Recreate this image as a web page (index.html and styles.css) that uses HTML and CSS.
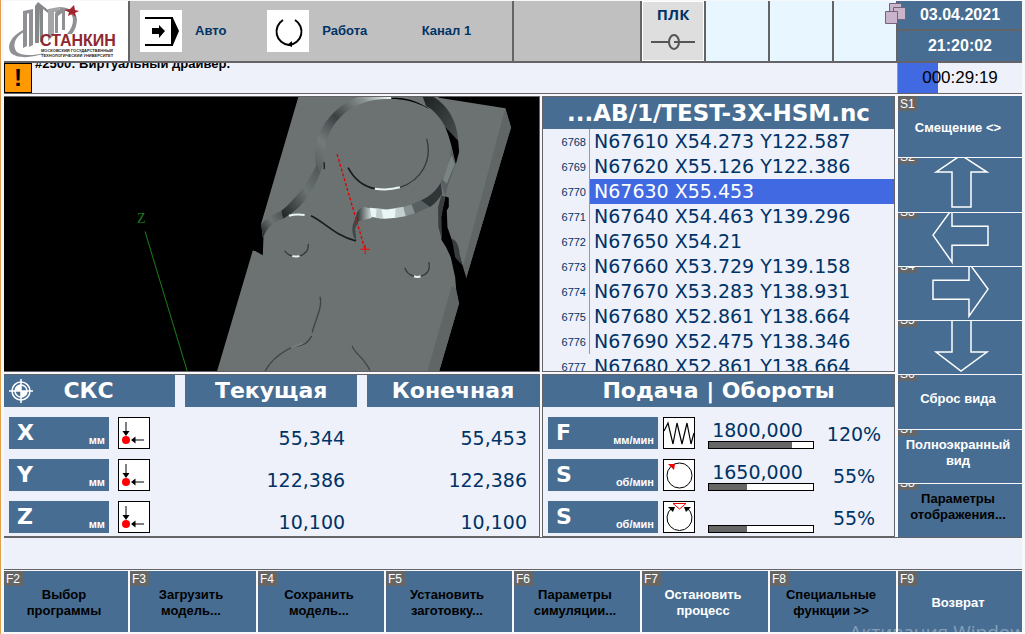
FILE: index.html
```html
<!DOCTYPE html>
<html lang="ru">
<head>
<meta charset="utf-8">
<title>СТАНКИН ЧПУ</title>
<link rel="stylesheet" href="styles.css">
</head>
<body>
<svg class="defs" aria-hidden="true">
  <symbol id="refpoint" viewBox="0 0 30 30">
    <path d="M7 4v10M16 22h9" stroke="#555" stroke-width="1.5"/>
    <path d="M3.500 13h7L7 18zM12 22l4.500-3.500v7z"/>
    <circle cx="7" cy="22" r="4" fill="#f00"/>
  </symbol>
</svg>

<header class="top cols">
  <div class="logo">
    <svg viewBox="0 0 124 60" role="img" aria-label="Станкин">
      <path d="M19 29C7 35 2 45 7 52c6 6 22 5 34 0-13 3-25 3-29-2-4-7 0-15 8-19z" fill="#8f9194"/>
      <path d="M19 10l10-2v36l-4 2V12l-2 1v32l-4 2z" fill="#8f9194"/>
      <path d="M31 5l3-4 10 8v3l-5-4v33h-3V7l-1 35h-4z" fill="#85888b"/>
      <path d="M44 8l11-2v5h-5v23l-6 6z" fill="#a3a5a7"/>
      <path d="M57 7l4 1v21h-3V12l-4 3v17h-3V12z" fill="#8f9194"/>
      <path d="M55 6c9 0 17 4 18 12 0 6-2 11-5 15h-5c4-5 6-9 6-14 0-7-6-10-13-10z" fill="#8f9194"/>
      <path d="M70 4l1 5 4 1-4 2 1 4-4-3-4 2 1-4-5-2 6-1z" fill="#a3262e"/>
      <text class="logo-name" x="36" y="45">СТАНКИН</text>
      <text class="logo-sub" x="37" y="51">МОСКОВСКИЙ ГОСУДАРСТВЕННЫЙ</text>
      <text class="logo-sub" x="37" y="56">ТЕХНОЛОГИЧЕСКИЙ УНИВЕРСИТЕТ</text>
    </svg>
  </div>
  <div class="modes">
    <div class="mode">
      <svg class="mode-icon" viewBox="0 0 42 42" aria-hidden="true"><path d="M5 8h27v27H5" fill="none" stroke="#000" stroke-width="2"/><path d="M31 8h2l6 13-6 14h-2zM12 18h7v-3l6 6-6 7v-4h-7z"/></svg>
      <span>Авто</span>
    </div>
    <div class="mode">
      <svg class="mode-icon" viewBox="0 0 42 42" aria-hidden="true"><path d="M16 10A13.500 13.500 0 0 0 22 35A13.500 13.500 0 0 0 28 10" fill="none" stroke="#000" stroke-width="2"/><path d="M20 35l5-4v6z"/></svg>
      <span>Работа</span>
    </div>
    <div class="mode channel"><span>Канал 1</span></div>
  </div>
  <div class="idle"></div>
  <div class="pair">
    <div class="plc"><span>ПЛК</span>
      <svg viewBox="0 0 46 18" aria-hidden="true"><path d="M1 9h18M24 9h21" stroke="#555" stroke-width="2"/><ellipse cx="24" cy="9" rx="5" ry="7" fill="none" stroke="#555" stroke-width="2"/></svg>
    </div>
    <div class="free"></div>
  </div>
  <div class="pair"><div class="free"></div><div class="free"></div></div>
  <div class="clock">
    <time>03.04.2021</time><time>21:20:02</time>
    <svg class="stack" viewBox="0 0 21 22" aria-hidden="true"><g fill="#c9b4cb" stroke="#72627c"><path d="M4.500.5h12v12h-12z"/><path d="M8.500 4.500h12v12h-12z"/><path d="M.5 8.500h12v12H.5z"/></g></svg>
  </div>
</header>

<div class="alarm">
  <div class="alarm-sign">!</div>
  <div class="alarm-text"><p>#2500: Виртуальный драйвер.</p></div>
  <div class="timer"><span>000:29:19</span></div>
</div>

<main class="work">
  <section class="scene">
    <svg viewBox="0 0 536 273" preserveAspectRatio="xMidYMid slice" role="img" aria-label="Модель детали">
      <defs>
        <linearGradient id="g1" x1="0" y1="1" x2="1" y2="0"><stop offset="0" stop-color="#555b5c"/><stop offset=".25" stop-color="#747a7b"/><stop offset=".5" stop-color="#3c4042"/><stop offset=".8" stop-color="#8c9494"/><stop offset="1" stop-color="#f4ffff"/></linearGradient>
        <linearGradient id="g2" x1="1" y1="0" x2="0" y2="1"><stop offset="0" stop-color="#4b5152"/><stop offset=".45" stop-color="#6b7272"/><stop offset="1" stop-color="#1c1f20"/></linearGradient>
        <linearGradient id="g3" x1="0" y1="0" x2="1" y2="1"><stop offset="0" stop-color="#1c2021"/><stop offset="1" stop-color="#4a5051"/></linearGradient>
        <linearGradient id="g4"><stop offset="0" stop-color="#2b2f30"/><stop offset="1" stop-color="#d8e4e4"/></linearGradient>
      </defs>
      <g transform="translate(196 -7) scale(.3333)">
        <path fill="#6b7271" d="M298 15H716V23L915 55 932 112 798 562 770 520V600L777 637 716 845H52L160 480 185 485 190 440 185 400z"/>
        <path fill="#5f6665" d="M915 55l17 57-134 450-12-26zM755 585l15 10 7 42-61 208h-35z"/>
        <path fill="url(#g1)" d="M573 18H482C405 45 340 120 346 205L362 247 374 215C368 150 400 90 455 55 500 30 530 27 573 27z"/>
        <path fill="url(#g2)" d="M346 205L362 247C335 315 300 360 250 385L245 362C290 325 330 270 350 225z"/>
        <path fill="url(#g2)" d="M245 362L250 386C220 395 200 415 192 440L184 402C200 385 220 372 245 362z"/>
        <path d="M192 440L190 494 165 480 182 440zM372 215v22h3v-20zM575 24C620 20 660 38 690 58L670 48C640 34 610 27 575 27z"/>
        <path fill="url(#g3)" d="M668 20H700C740 45 772 90 774 155L735 110C720 80 695 55 678 48z"/>
        <path d="M735 110L774 152 777 185 767 222C757 180 750 145 735 110z"/>
        <path fill="#5a6061" d="M752 170L766 222 742 290 736 318 722 275C738 250 752 215 752 170z"/>
        <path fill="#7b8484" d="M754 195L764 222 740 280 728 268z"/>
        <path d="M736 318L746 322V350L740 360 742 410 755 448 775 485 798 560 785 575 777 637 768 595 765 560 752 500 738 470 724 448 720 390z"/>
        <path fill="#383d3e" d="M724 315L735 320 724 380 726 450 715 410 714 350zM755 445C770 450 778 470 778 490L787 525 765 500z"/>
        <path fill="url(#g4)" d="M495 350L517 356 515 383 480 392 470 398V375C472 360 482 352 495 350z"/>
        <path fill="#e8f6f6" d="M510 352L560 357 592 353 590 382 555 385 515 380z"/>
        <path fill="#c3cecf" d="M530 355h15l5 30-22-2zM587 353l25-4 8 28-35 6z"/>
        <path fill="#889192" d="M610 350l25-8 12 26-30 9z"/>
        <path fill="#596061" d="M635 342l30-13 25 20-45 20z"/>
        <path fill="#303537" d="M663 330C690 318 710 298 722 277L726 310C713 332 700 342 690 350z"/>
        <path fill="#424849" d="M470 375L462 395C455 410 457 425 462 440L470 452 466 415 474 398z"/>
        <g fill="none">
          <path stroke="#171b1c" stroke-width="5" d="M445 232C465 270 490 288 525 295M334 376C375 395 405 435 468 451"/>
          <path stroke="#e8f4f4" stroke-width="6" d="M525 295Q565 301 600 291M268 376Q290 370 315 374M278 496q12 4 22 0M642 557q10 4 20 0"/>
          <path stroke="#353b3c" stroke-width="4" d="M600 291C665 270 697 210 680 146M255 480q10 14 23 16M300 496q28-8 26-36M615 532q4 18 27 25M662 557q32-9 24-42"/>
          <path stroke="#3e4445" stroke-width="4" d="M361 618C370 650 345 690 338 725M336 735C315 775 290 760 265 775 230 795 210 815 197 840M457 765C465 790 490 795 510 838"/>
          <path stroke="#777f7f" stroke-width="5" d="M275 771l35-14"/>
          <path stroke="#e00000" stroke-width="4" stroke-dasharray="9 6" d="M412 192L495 475"/>
          <path stroke="#f00" stroke-width="3" d="M482 476h28M496 462v28"/>
        </g>
      </g>
      <path d="M142 134L184 273" stroke="#177a17"/>
      <text class="axis" x="134" y="126">Z</text>
    </svg>
  </section>

  <section class="program">
    <h2>...AB/1/TEST-3X-HSM.nc</h2>
    <div class="listing">
      <table>
        <tr><th>6768</th><td>N67610 X54.273 Y122.587</td></tr>
        <tr><th>6769</th><td>N67620 X55.126 Y122.386</td></tr>
        <tr class="current"><th>6770</th><td>N67630 X55.453</td></tr>
        <tr><th>6771</th><td>N67640 X54.463 Y139.296</td></tr>
        <tr><th>6772</th><td>N67650 X54.21</td></tr>
        <tr><th>6773</th><td>N67660 X53.729 Y139.158</td></tr>
        <tr><th>6774</th><td>N67670 X53.283 Y138.931</td></tr>
        <tr><th>6775</th><td>N67680 X52.861 Y138.664</td></tr>
        <tr><th>6776</th><td>N67690 X52.475 Y138.346</td></tr>
        <tr><th>6777</th><td>N67680 X52.861 Y138.664</td></tr>
      </table>
    </div>
  </section>

  <section class="panel axes">
    <table class="coords">
      <colgroup><col class="c-axis"><col class="c-now"><col></colgroup>
      <thead><tr>
        <th><div class="sks"><svg viewBox="0 0 24 24" aria-hidden="true"><g fill="none" stroke="#fff" stroke-width="1.500"><circle cx="12" cy="12" r="9"/><circle cx="12" cy="12" r="6"/><path d="M12 0v24M0 12h24"/></g><path d="M12 12V6a6 6 0 0 0-6 6zM12 12v6a6 6 0 0 0 6-6z" fill="#fff"/></svg><span>СКС</span></div></th>
        <th>Текущая</th><th>Конечная</th>
      </tr></thead>
      <tbody>
        <tr><th><div class="axis-row"><div class="tag"><b>X</b><small>мм</small></div><svg class="box"><use href="#refpoint"/></svg></div></th><td>55,344</td><td>55,453</td></tr>
        <tr><th><div class="axis-row"><div class="tag"><b>Y</b><small>мм</small></div><svg class="box"><use href="#refpoint"/></svg></div></th><td>122,386</td><td>122,386</td></tr>
        <tr><th><div class="axis-row"><div class="tag"><b>Z</b><small>мм</small></div><svg class="box"><use href="#refpoint"/></svg></div></th><td>10,100</td><td>10,100</td></tr>
      </tbody>
    </table>
  </section>

  <section class="panel rates">
    <table class="feed">
      <colgroup><col class="c-tag"><col class="c-icon"><col class="c-bar"><col></colgroup>
      <thead><tr><th colspan="4">Подача | Обороты</th></tr></thead>
      <tbody>
        <tr>
          <th><div class="tag"><b>F</b><small>мм/мин</small></div></th>
          <td><svg class="box" viewBox="0 0 30 30"><path d="M0 13L4 5l5 21 4-21 5 21 5-21 4 21 3-11" fill="none" stroke="#000" stroke-width="1.200"/></svg></td>
          <td><div class="gauge"><span>1800,000</span><progress value="80" max="100" aria-label="Подача"></progress></div></td>
          <td class="pct">120%</td>
        </tr>
        <tr>
          <th><div class="tag"><b>S</b><small>об/мин</small></div></th>
          <td><svg class="box" viewBox="0 0 30 30"><circle cx="15.500" cy="15.500" r="12.500" fill="none" stroke="#000"/><path d="M4 4l7 0-1 6z" fill="#e00"/></svg></td>
          <td><div class="gauge"><span>1650,000</span><progress value="37" max="100" aria-label="Обороты"></progress></div></td>
          <td class="pct">55%</td>
        </tr>
        <tr>
          <th><div class="tag"><b>S</b><small>об/мин</small></div></th>
          <td><svg class="box" viewBox="0 0 30 30"><path d="M8 6A12.500 12.500 0 1 0 23 6" fill="none" stroke="#000"/><path d="M4 5h7l-2 5zM27 5h-7l2 5z"/><path d="M9 1.500h13L15.500 7z" fill="#fff" stroke="#e00"/></svg></td>
          <td><div class="gauge"><span></span><progress value="37" max="100" aria-label="Обороты шпинделя"></progress></div></td>
          <td class="pct">55%</td>
        </tr>
      </tbody>
    </table>
  </section>

  <nav class="side">
    <button class="key light"><kbd>S1</kbd>Смещение &lt;&gt;</button>
    <button class="key light" aria-label="Вверх"><kbd>S2</kbd><svg viewBox="0 0 124 53"><path d="M38 14L63-3 89 14H73V49H54V14z"/></svg></button>
    <button class="key light" aria-label="Влево"><kbd>S3</kbd><svg viewBox="0 0 124 53"><path d="M35 22L54-4V13H90V32H54V49z"/></svg></button>
    <button class="key light" aria-label="Вправо"><kbd>S4</kbd><svg viewBox="0 0 124 53"><path d="M35 13H71V-4L90 22 71 49V32H35z"/></svg></button>
    <button class="key light" aria-label="Вниз"><kbd>S5</kbd><svg viewBox="0 0 124 53"><path d="M54-3H73V31H89L63 50 38 31H54z"/></svg></button>
    <button class="key light text"><kbd>S6</kbd>Сброс вида</button>
    <button class="key light text"><kbd>S7</kbd>Полноэкранный вид</button>
    <button class="key text"><kbd>S8</kbd>Параметры отображения...</button>
  </nav>
</main>

<div class="prompt"></div>

<footer class="bottom cols">
  <button class="key"><kbd>F2</kbd>Выбор<br>программы</button>
  <button class="key"><kbd>F3</kbd>Загрузить<br>модель...</button>
  <button class="key"><kbd>F4</kbd>Сохранить<br>модель...</button>
  <button class="key"><kbd>F5</kbd>Установить<br>заготовку...</button>
  <button class="key"><kbd>F6</kbd>Параметры<br>симуляции...</button>
  <button class="key light"><kbd>F7</kbd>Остановить<br>процесс</button>
  <button class="key"><kbd>F8</kbd>Специальные<br>функции &gt;&gt;</button>
  <button class="key light"><kbd>F9</kbd>Возврат</button>
  <div class="watermark">Активация Windows</div>
</footer>
</body>
</html>
```

FILE: styles.css
```css
:root {
  --blue: #476d92;
  --pale: #eef1f9;
  --ink: #003366;
  --line: #636368;
  --sans: "Liberation Sans", Arial, sans-serif;
  --wide: "DejaVu Sans", Verdana, sans-serif;
}
* { box-sizing: border-box; }
body {
  margin: 0;
  min-height: 100vh;
  display: flex;
  flex-direction: column;
  padding: 1px 3px 2px;
  border-left: 1px solid #e0a04c;
  background: #f8f8fc;
  font: bold 13px/16px var(--sans);
  color: var(--ink);
}
h2, p { margin: 0; }
svg { display: block; }
.defs { position: absolute; width: 0; height: 0; }
.cols {
  display: grid;
  grid-template-columns: 124fr repeat(6, 126fr) 124fr;
  gap: 2px;
}

/* status header */
.top { height: 62px; background: var(--line); border-bottom: 2px solid var(--line); }
.logo { background: #fff; }
.logo svg { width: 100%; height: 100%; }
.logo-name { font: bold 16px var(--sans); fill: #8f2830; }
.logo-sub { font: bold 4px var(--sans); fill: #222; }
.modes {
  grid-column: span 3;
  display: grid;
  grid-template-columns: repeat(3, 1fr);
  background: #c0c0c0;
}
.mode { display: flex; align-items: center; gap: 13px; padding-left: 10px; }
.channel { padding-left: 37px; }
.mode-icon { width: 42px; height: 42px; background: #fff; }
.idle { background: #c0c0c0; }
.pair { display: grid; grid-template-columns: 1fr 1fr; gap: 2px; }
.free { background: #e8f6ff; }
.plc {
  display: flex;
  flex-direction: column;
  align-items: center;
  gap: 11px;
  padding-top: 4px;
  background: #dedede;
  border: 1px solid #fff;
  font: bold 15px/16px "Open Sans", sans-serif;
}
.plc svg { width: 46px; height: 18px; }
.clock {
  position: relative;
  display: grid;
  grid-template-rows: 28fr 30fr;
  gap: 2px;
  color: #fff;
  font-size: 16px;
}
.clock time { display: grid; place-items: center; background: var(--blue); }
.stack { position: absolute; left: -13px; top: 2px; width: 21px; height: 22px; }

/* alarm line */
.alarm {
  display: flex;
  height: 31px;
  margin-bottom: 2px;
  background: var(--pale);
  border-bottom: 1px solid var(--line);
}
.alarm-sign {
  width: 28px;
  border: 1px solid #000;
  background: #ff9900;
  color: #000;
  font-size: 24px;
  line-height: 28px;
  text-align: center;
}
.alarm-text { flex: 1; overflow: hidden; padding-left: 3px; color: #000; }
.alarm-text p { margin-top: -7px; }
.timer {
  flex: 0 0 125px;
  display: grid;
  place-items: center;
  border-left: 1px solid #999;
  background: linear-gradient(90deg, #4169e1 32%, transparent 32%);
  color: #000;
  font-size: 17px;
  font-weight: normal;
}

/* working area */
.work {
  flex: 1;
  display: grid;
  grid-template-columns: 536fr 354fr 126fr;
  grid-template-rows: 1fr auto;
  gap: 2px 1px;
}
.scene { border: 1px solid var(--line); border-left: 0; background: #000; display: grid; }
.scene svg { width: 100%; height: 0; min-height: 100%; }
.axis { font: 14px "Liberation Serif", serif; fill: #177a17; }
.program, .panel { border: 1px solid var(--line); background: var(--pale); }
.program { display: flex; flex-direction: column; margin-left: 1px; }
.program h2, thead th {
  height: 32px;
  padding: 0;
  background: var(--blue);
  color: #fff;
  font: bold 22px/32px var(--wide);
  text-align: center;
}
.program h2 { font-size: 23px; }
.listing { flex: 1 1 0; overflow: hidden; }
table { width: 100%; border-spacing: 0; border-collapse: separate; }
.listing td, .listing th { height: 25px; padding: 0; }
.listing th {
  width: 47px;
  padding-right: 3px;
  border-right: 1px solid #999;
  font: 11px var(--sans);
  text-align: right;
}
.listing tr:last-child th { border-color: transparent; }
.listing td { padding-left: 4px; font: 19px/25px var(--wide); white-space: nowrap; }
.listing .current td { background: #4169e1; color: #fff; }

.panel { padding-bottom: 3px; }
.axes { border-left: 0; }
.rates { margin-left: 1px; }
.panel table { table-layout: fixed; }
.c-axis { width: 32%; }
.c-now { width: 34%; }
.coords thead th + th { border-left: 10px solid var(--pale); }
.sks { display: flex; align-items: center; padding-left: 5px; }
.sks svg { width: 24px; height: 24px; }
.sks span { flex: 1; padding-right: 31px; }
tbody th { text-align: left; }
.panel tbody th, .panel tbody td { height: 42px; padding: 10px 0 0; vertical-align: top; }
.panel tbody th { padding-left: 5px; }
.axis-row { display: flex; gap: 9px; }
.tag {
  display: flex;
  justify-content: space-between;
  align-items: flex-end;
  width: 110px;
  height: 32px;
  padding: 0 4px 0 8px;
  background: var(--blue);
  color: #fff;
}
.axis-row .tag { width: 100px; }
.tag b { font: bold 22px/32px var(--wide); }
.tag small { font: bold 11px/18px var(--sans); }
.box { width: 32px; height: 32px; border: 1px solid #000; background: #fff; }
.panel .coords tbody td { padding: 20px 12px 0 0; font: 19px/22px var(--wide); text-align: right; }
.c-tag { width: 120px; }
.c-icon { width: 45px; }
.c-bar { width: 106px; }
.gauge { display: flex; flex-direction: column; height: 32px; justify-content: space-between; }
.gauge span { height: 24px; padding-right: 7px; font: 19px/26px var(--wide); text-align: center; }
progress { appearance: none; display: block; width: 100%; height: 8px; border: 1px solid #000; background: #fff; }
progress::-webkit-progress-bar { background: #fff; }
progress::-webkit-progress-value { background: #666; }
.panel tbody .pct { padding-top: 12px; font: 19px/30px var(--wide); text-align: center; }

/* soft keys */
.side {
  grid-column: 3;
  grid-row: 1 / 3;
  display: grid;
  grid-template-rows: 61fr repeat(7, 53fr);
  gap: 1px;
  padding-left: 2px;
}
.key {
  position: relative;
  min-width: 0;
  min-height: 0;
  margin: 0;
  padding: 2px 6px 0 2px;
  overflow: hidden;
  border: 0;
  border-radius: 0;
  background: var(--blue);
  color: #000;
  font: bold 13px/16px var(--sans);
}
.key.light { color: #fff; }
.key svg { position: absolute; inset: 0; width: 100%; height: 100%; fill: none; stroke: #fff; stroke-width: 1.500; }
.key.text { padding: 0 5px 6px 1px; }
.key kbd {
  position: absolute;
  left: 0;
  top: 0;
  width: 20px;
  height: 15px;
  padding-left: 2px;
  background: #666;
  color: #fff;
  font: 12px/16px var(--sans);
  text-align: left;
}
.side .key + .key kbd { top: -9px; }

.prompt { height: 33px; background: var(--pale); border: solid var(--line); border-width: 1px 0; }
.bottom { position: relative; height: 61px; margin-top: 1px; overflow: hidden; }
.bottom .key { height: 61px; padding-top: 3px; }
.watermark {
  position: absolute;
  right: -12px;
  bottom: -12px;
  color: rgba(255, 255, 255, .35);
  font: 19px/24px "Open Sans", sans-serif;
  pointer-events: none;
}
```
